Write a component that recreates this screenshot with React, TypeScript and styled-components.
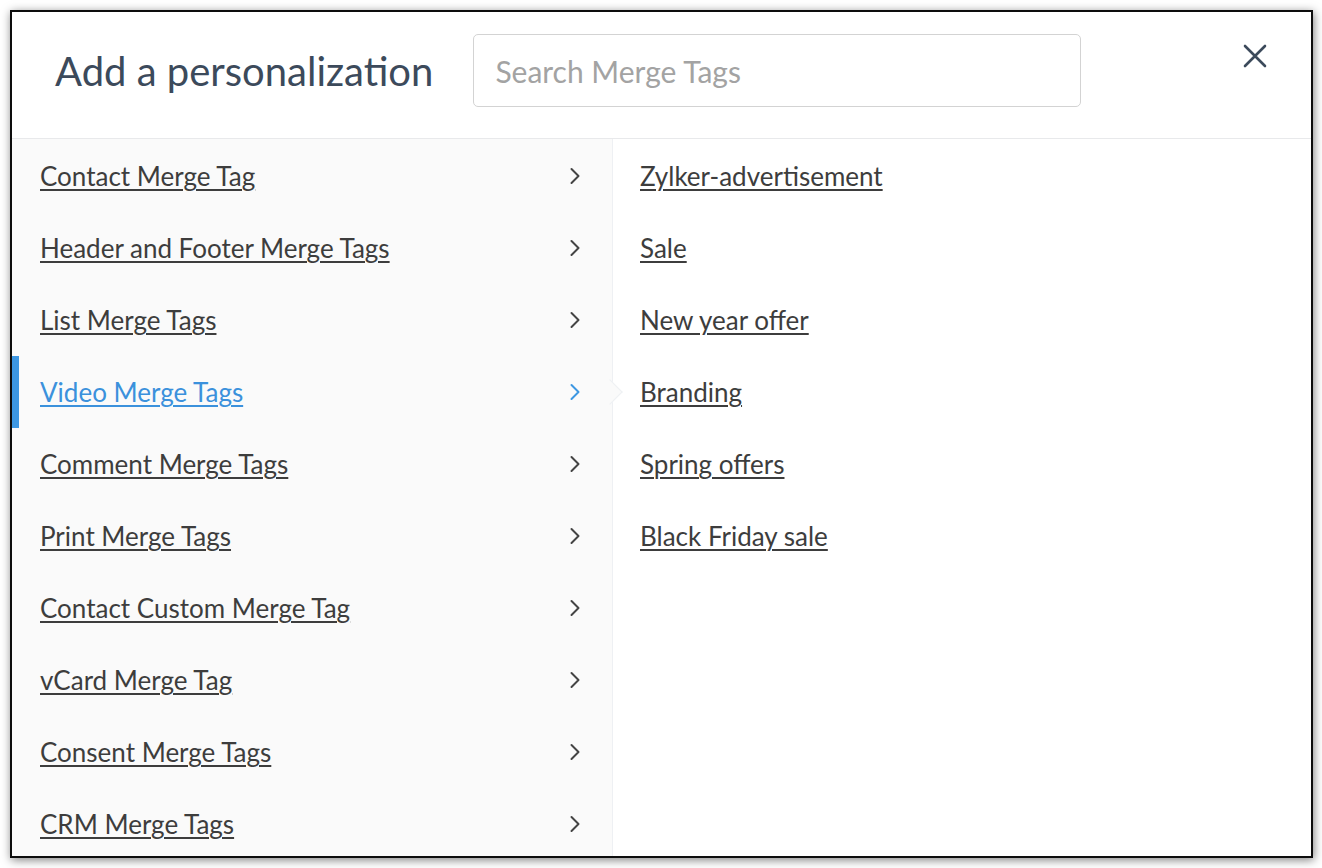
import React from "react";
import styled, { createGlobalStyle } from "styled-components";

const Global = createGlobalStyle`
  html, body { margin: 0; padding: 0; background: #ffffff; }
  body { font-family: Lato, "Open Sans", sans-serif; }
  * { box-sizing: border-box; }
`;

const Page = styled.div`
  width: 1322px;
  height: 868px;
  padding: 10px 9px 10px 10px;
  background: #ffffff;
`;

const Dialog = styled.div`
  width: 1303px;
  height: 848px;
  border: 2px solid #0d0d0d;
  box-shadow: 1px 2px 9px rgba(0, 0, 0, 0.5);
  background: #ffffff;
  display: flex;
  flex-direction: column;
  overflow: hidden;
`;

const Header = styled.div`
  height: 127px;
  flex: none;
  display: flex;
  align-items: center;
  padding: 0 43px 9px 43px;
  border-bottom: 1px solid #e8e9eb;
`;

const Title = styled.h1`
  margin: 0;
  font-family: Lato, sans-serif;
  font-weight: 400;
  font-size: 40px;
  color: #3c4a5b;
  white-space: nowrap;
`;

const Search = styled.input`
  margin-left: 40px;
  width: 608px;
  height: 73px;
  border: 1.5px solid #d3d3d3;
  border-radius: 5px;
  padding: 0 21px;
  font-family: Lato, sans-serif;
  font-size: 30px;
  color: #333;
  outline: none;
  &::placeholder { color: #a3a3a3; }
`;

const Close = styled.button`
  margin-left: auto;
  align-self: flex-start;
  margin-top: 31px;
  width: 26px;
  height: 26px;
  padding: 0;
  border: none;
  background: none;
  display: flex;
  align-items: center;
  justify-content: center;
`;

const Body = styled.div`
  flex: 1;
  display: flex;
  min-height: 0;
`;

const Categories = styled.div`
  width: 601px;
  flex: none;
  background: #fafafa;
  border-right: 1px solid #eef0f3;
  padding-top: 1px;
`;

const Row = styled.div<{ $active?: boolean }>`
  position: relative;
  height: 72px;
  display: flex;
  align-items: center;
  padding: 0 31px 0 21px;
  border-left: 7px solid ${(p) => (p.$active ? "#3d97e2" : "transparent")};
  color: ${(p) => (p.$active ? "#3b91dc" : "#3d3d3d")};
`;

const Notch = styled.span`
  position: absolute;
  right: -13px;
  top: 50%;
  width: 18px;
  height: 18px;
  margin-top: -9px;
  background: #fafafa;
  border-top: 1px solid #eef0f3;
  border-right: 1px solid #eef0f3;
  transform: translateX(-6px) rotate(45deg);
`;

const Label = styled.a`
  font-family: Lato, sans-serif;
  font-size: 26px;
  color: inherit;
  text-decoration: underline;
  text-underline-offset: 3px;
  text-decoration-thickness: 2px;
  cursor: pointer;
`;

const Chevron = styled.svg`
  margin-left: auto;
  flex: none;
`;

const Tags = styled.div`
  flex: 1;
  padding-top: 1px;
  padding-left: 27px;
`;

const TagRow = styled.div`
  height: 72px;
  display: flex;
  align-items: center;
  color: #3d3d3d;
`;

const categories = [
  "Contact Merge Tag",
  "Header and Footer Merge Tags",
  "List Merge Tags",
  "Video Merge Tags",
  "Comment Merge Tags",
  "Print Merge Tags",
  "Contact Custom Merge Tag",
  "vCard Merge Tag",
  "Consent Merge Tags",
  "CRM Merge Tags",
];

const tags = [
  "Zylker-advertisement",
  "Sale",
  "New year offer",
  "Branding",
  "Spring offers",
  "Black Friday sale",
];

export default function App() {
  return (
    <Page>
      <Global />
      <Dialog>
        <Header>
          <Title>Add a personalization</Title>
          <Search placeholder="Search Merge Tags" />
          <Close aria-label="Close">
            <svg width="24" height="24" viewBox="0 0 24 24">
              <path d="M2 2L22 22M22 2L2 22" stroke="#3c4a5b" strokeWidth="2.6" strokeLinecap="round" />
            </svg>
          </Close>
        </Header>
        <Body>
          <Categories>
            {categories.map((c, i) => {
              const active = i === 3;
              return (
                <Row key={c} $active={active}>
                  <Label>{c}</Label>
                  <Chevron width="12" height="18" viewBox="0 0 12 18">
                    <path
                      d="M2.5 2L9.5 9L2.5 16"
                      fill="none"
                      stroke={active ? "#3d97e2" : "#444"}
                      strokeWidth="2"
                      strokeLinecap="round"
                      strokeLinejoin="round"
                    />
                  </Chevron>
                  {active && <Notch />}
                </Row>
              );
            })}
          </Categories>
          <Tags>
            {tags.map((t) => (
              <TagRow key={t}>
                <Label>{t}</Label>
              </TagRow>
            ))}
          </Tags>
        </Body>
      </Dialog>
    </Page>
  );
}
